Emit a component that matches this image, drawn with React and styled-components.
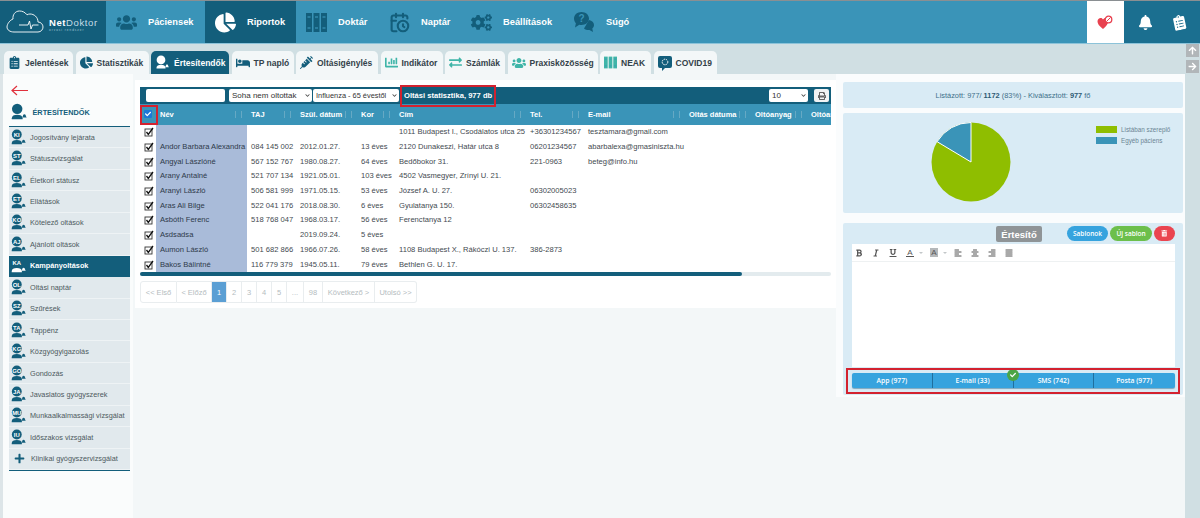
import React from 'react';
import styled, { createGlobalStyle } from 'styled-components';
import {
  FaUsers, FaChartPie, FaCogs, FaBell, FaBold, FaItalic, FaUnderline, FaAlignLeft, FaAlignCenter,
  FaAlignRight, FaAlignJustify, FaPrint, FaSyringe, FaBed, FaChartBar, FaTrashAlt, FaCheck, FaPlus,
  FaArrowUp, FaArrowRight, FaChevronDown, FaClipboardList, FaExchangeAlt,
} from 'react-icons/fa';
import { CalendarClock } from 'lucide-react';

const DARK = '#135e7b';
const BLUE = '#3a94b8';

const GlobalStyle = createGlobalStyle`
  html, body { margin: 0; padding: 0; background: #f3f7f8; }
  * { box-sizing: border-box; }
  body { font-family: "Liberation Sans", Arial, sans-serif; color: #444; }
`;

const Page = styled.div`
  width: 1200px;
  height: 518px;
  overflow: hidden;
  display: flex;
  flex-direction: column;
  border-top: 1px solid #8a8f92;
`;

const Header = styled.header`
  height: 43px;
  flex: none;
  display: flex;
  background: ${BLUE};
  border-bottom: 1px solid #8cc3d9;
`;

const Logo = styled.div`
  width: 106px;
  background: ${DARK};
  display: flex;
  align-items: center;
  padding-left: 6px;
  gap: 5px;
  color: #fff;
`;

const LogoName = styled.div`
  font-size: 9.5px;
  letter-spacing: 0.6px;
  line-height: 11px;
  padding-top: 5px;
  b { font-weight: 700; }
  span { font-weight: 400; color: #c6dde6; }
  small { display: block; font-size: 3px; line-height: 5px; letter-spacing: 1px; color: #a9cbd8; white-space: nowrap; }
`;

const NavItem = styled.div`
  display: flex;
  align-items: center;
  gap: 11px;
  width: ${(p) => p.$w}px;
  padding-left: 10px;
  font-size: 9.3px;
  font-weight: 700;
  color: #fff;
  background: ${(p) => (p.$active ? DARK : 'transparent')};
  svg { flex: none; color: ${(p) => (p.$active ? '#fff' : '#135e7b')}; }
`;

const HeaderRight = styled.div`
  margin-left: auto;
  display: flex;
`;

const HeartCell = styled.div`
  width: 37px;
  background: #fff;
  display: flex;
  align-items: center;
  justify-content: center;
`;

const DarkCells = styled.div`
  width: 76px;
  background: #1b6f90;
  color: #fff;
  display: flex;
  align-items: center;
  justify-content: space-around;
  padding: 0 4px;
`;

const TabBar = styled.nav`
  height: 30px;
  flex: none;
  background: #d0dfe3;
  display: flex;
  align-items: flex-end;
  padding-left: 4px;
  gap: 2.5px;
`;

const Tab = styled.div`
  width: ${(p) => p.$w}px;
  height: 23px;
  display: flex;
  align-items: center;
  gap: 4px;
  padding-left: 4px;
  border-radius: 5px 5px 0 0;
  font-size: 8.5px;
  font-weight: 700;
  white-space: nowrap;
  background: ${(p) => (p.$active ? DARK : '#f3f7f8')};
  color: ${(p) => (p.$active ? '#fff' : '#33424a')};
  svg { flex: none; color: ${(p) => (p.$active ? '#fff' : p.$tint || DARK)}; }
`;

const ScrollButtons = styled.div`
  margin-left: auto;
  align-self: flex-start;
  display: flex;
  flex-direction: column;
  gap: 3px;
  margin-right: 1px;
`;

const ScrollButton = styled.div`
  width: 13px;
  height: 13px;
  background: #b1b6b9;
  color: #fff;
  font-size: 9px;
  display: flex;
  align-items: center;
  justify-content: center;
`;

const Body = styled.div`
  flex: 1;
  display: flex;
  min-height: 0;
  border-left: 3px solid #dde5e8;
  border-right: 15px solid #d0dfe3;
`;

const Sidebar = styled.aside`
  width: 130px;
  flex: none;
  padding: 8px 3px 0 5.5px;
  background: #fafcfc;
`;

const BackArrow = styled.div`
  height: 16px;
  padding-left: 2px;
  color: #e0313d;
`;

const SideTitle = styled.div`
  height: 29px;
  display: flex;
  align-items: center;
  gap: 5px;
  padding-left: 1px;
  font-size: 7.3px;
  font-weight: 700;
  color: ${DARK};
  border-bottom: 1px solid ${DARK};
`;

const SideList = styled.div`
  border-bottom: 1px solid ${DARK};
`;

const SideItem = styled.div`
  height: 21.44px;
  display: flex;
  align-items: center;
  gap: 3.5px;
  padding-left: 1px;
  font-size: 7.3px;
  white-space: nowrap;
  font-weight: ${(p) => (p.$active ? 700 : 400)};
  background: ${(p) => (p.$active ? DARK : '#e1e9ed')};
  color: ${(p) => (p.$active ? '#fff' : '#4d5a60')};
  border-bottom: 1px solid ${(p) => (p.$active ? DARK : '#eef3f5')};
`;

const Main = styled.main`
  width: 701px;
  height: 228px;
  flex: none;
  margin: 6px 0 0 2px;
  padding: 7px 5px 0;
  background: #fff;
`;

const Toolbar = styled.div`
  width: 691px;
  height: 17px;
  background: ${DARK};
  display: flex;
  align-items: center;
  padding-left: 6px;
`;

const SearchBox = styled.div`
  width: 79px;
  height: 13px;
  background: #fff;
  border-radius: 2px;
  margin-right: 4px;
`;

const Select = styled.div`
  width: ${(p) => p.$w}px;
  height: 13px;
  background: #fff;
  border-radius: 2px;
  margin-right: 1px;
  padding: 0 2px 0 3px;
  display: flex;
  align-items: center;
  justify-content: space-between;
  font-size: ${(p) => p.$fs || 8}px;
  color: #333;
  white-space: nowrap;
  svg { flex: none; font-size: 5px; color: #444; }
`;

const Highlight = styled.div`
  width: 96px;
  height: 22px;
  flex: none;
  display: flex;
  align-items: center;
  padding-left: 2px;
  font-size: 7.6px;
  font-weight: 700;
  color: #fff;
  white-space: nowrap;
  border: 2px solid #d3222f;
`;

const ToolbarRight = styled.div`
  margin-left: auto;
  display: flex;
  align-items: center;
  gap: 5px;
  padding-right: 2px;
`;

const PrintButton = styled.div`
  width: 15px;
  height: 13px;
  background: #f1f3f4;
  border-radius: 2px;
  color: #666;
  font-size: 8px;
  display: flex;
  align-items: center;
  justify-content: center;
`;

const TableClip = styled.div`
  width: 691px;
  height: 168px;
  overflow: hidden;
`;

const Table = styled.table`
  width: 760px;
  table-layout: fixed;
  border-collapse: collapse;
  font-size: 7.6px;
  color: #3f4a50;
`;

const HeadRow = styled.tr`
  height: 21px;
  background: ${BLUE};
  color: #fff;
`;

const HeadCell = styled.th`
  position: relative;
  width: ${(p) => p.$w}px;
  text-align: left;
  font-weight: 700;
  font-size: 7.5px;
  padding: 0 0 0 4px;
  white-space: nowrap;
  overflow: hidden;
  &::after {
    content: '';
    position: absolute;
    right: 5px;
    top: 7px;
    width: 5px;
    height: 7px;
    border-left: 1.5px solid #66a9c4;
    border-right: 1.5px solid #66a9c4;
  }
`;

const CheckHead = styled.th`
  width: 16px;
  padding: 0;
  position: relative;
`;

const HeadCheck = styled.span`
  position: absolute;
  left: 4px;
  top: 6px;
  width: 8px;
  height: 8px;
  background: #1a78d8;
  border-radius: 1px;
  color: #fff;
  font-size: 6px;
  display: flex;
  align-items: center;
  justify-content: center;
`;

const HeadOutline = styled.span`
  position: absolute;
  left: 0;
  top: 1px;
  width: 18px;
  height: 20px;
  border: 2px solid #d3222f;
  z-index: 1;
`;

const Row = styled.tr`
  height: 14.7px;
`;

const Cell = styled.td`
  padding: 0 0 0 4px;
  white-space: nowrap;
  overflow: hidden;
  line-height: 8px;
`;

const NameCell = styled(Cell)`
  background: #a9bbd9;
  color: #2e3a4a;
`;

const CheckCell = styled.td`
  padding: 0 0 0 4px;
  line-height: 0;
`;

const ScrollTrack = styled.div`
  width: 691px;
  height: 4px;
  background: #e3ebee;
  border-radius: 2px;
`;

const ScrollThumb = styled.div`
  width: 602px;
  height: 4px;
  background: ${DARK};
  border-radius: 2px;
`;

const Pager = styled.div`
  display: flex;
  margin-top: 5px;
  height: 22px;
`;

const PageButton = styled.div`
  width: ${(p) => p.$w}px;
  display: flex;
  align-items: center;
  justify-content: center;
  font-size: 7.5px;
  white-space: nowrap;
  border: 1px solid #e9edef;
  border-left-width: 0;
  background: ${(p) => (p.$active ? '#5b9fd4' : '#fff')};
  color: ${(p) => (p.$active ? '#fff' : '#b5bcc0')};
  &:first-child { border-left-width: 1px; border-radius: 3px 0 0 3px; }
  &:last-child { border-radius: 0 3px 3px 0; }
`;

const RightColumn = styled.section`
  width: 349px;
  flex: none;
  padding: 8px 2px 0 7px;
  display: flex;
  flex-direction: column;
  background: #fafcfd;
  height: 323px;
`;

const StatCard = styled.div`
  height: 26px;
  flex: none;
  background: #d9ebf5;
  border-radius: 2px;
  display: flex;
  align-items: center;
  justify-content: center;
  font-size: 7.4px;
  color: #40708a;
  white-space: pre;
  b { color: #2d5a73; }
`;

const ChartCard = styled.div`
  height: 100px;
  flex: none;
  margin-top: 5px;
  background: #d9ebf5;
  border-radius: 2px;
  display: flex;
  padding: 9px 0 0 88px;
`;

const Legend = styled.div`
  margin: 4px 0 0 85px;
  display: flex;
  flex-direction: column;
  gap: 4px;
`;

const LegendItem = styled.div`
  height: 7px;
  display: flex;
  align-items: center;
  gap: 4px;
  font-size: 6.3px;
  color: #6b8594;
  white-space: nowrap;
  i { width: 21px; height: 7px; background: ${(p) => p.$color}; }
`;

const NotifyCard = styled.div`
  height: 172px;
  flex: none;
  margin-top: 10px;
  padding: 3px 8px 0 9px;
  background: #d9ebf5;
  border-radius: 2px;
  position: relative;
`;

const NotifyHead = styled.div`
  height: 18px;
  display: flex;
  align-items: flex-start;
`;

const NotifyTitle = styled.div`
  width: 46px;
  height: 16px;
  margin-left: 144px;
  background: #8f9497;
  border-radius: 2px;
  color: #fff;
  font-size: 9.5px;
  font-weight: 700;
  display: flex;
  align-items: center;
  justify-content: center;
`;

const Pill = styled.div`
  width: ${(p) => p.$w}px;
  height: 15px;
  margin-left: ${(p) => p.$ml || 2}px;
  border-radius: 8px;
  background: ${(p) => p.$bg};
  color: #fff;
  font-family: "Open Sans", sans-serif;
  font-size: 6.5px;
  font-weight: 600;
  display: flex;
  align-items: center;
  justify-content: center;
`;

const Editor = styled.div`
  height: 123px;
  background: #fff;
`;

const EditorTools = styled.div`
  height: 18px;
  padding-left: 3px;
  display: flex;
  align-items: center;
  gap: 9px;
  color: #555;
  font-size: 8px;
  border-bottom: 1px solid #eef1f2;
`;

const ToolLetter = styled.span`
  display: flex;
  align-items: center;
  justify-content: center;
  width: 8px;
  height: 9px;
  font-size: 8px;
  background: ${(p) => (p.$box ? '#b5b8ba' : 'transparent')};
  border-bottom: ${(p) => (p.$box ? 0 : 1)}px solid #555;
  margin-right: -4px;
`;

const Caret = styled.span`
  width: 0;
  height: 0;
  margin-right: -2px;
  border-left: 2px solid transparent;
  border-right: 2px solid transparent;
  border-top: 2px solid #c3c7c9;
`;

const ChannelOutline = styled.div`
  position: absolute;
  left: 3px;
  right: 3px;
  top: 145px;
  height: 26px;
  border: 2px solid #d3222f;
`;

const ChannelRow = styled.div`
  margin-top: 6px;
  height: 15px;
  display: grid;
  grid-template-columns: repeat(4, 1fr);
  background: #36a3de;
  border-radius: 2px;
  position: relative;
  box-shadow: 0 1px 1px #7da7bd;
`;

const Channel = styled.div`
  display: flex;
  align-items: center;
  justify-content: center;
  font-family: "Open Sans", sans-serif;
  font-size: 6.8px;
  color: #fff;
  font-weight: 600;
  border-right: 1px solid ${(p) => (p.$last ? 'transparent' : '#1f6f9e')};
`;

const GreenBadge = styled.span`
  position: absolute;
  left: 155px;
  top: -4px;
  width: 12px;
  height: 12px;
  border-radius: 50%;
  background: #4ba546;
  color: #fff;
  font-size: 6px;
  display: flex;
  align-items: center;
  justify-content: center;
`;

// person silhouette with a small bell, head carries the short code
const PersonIcon = ({ code, light, size = 17 }) => {
  const c = light ? '#fff' : '#135e7b';
  return (
    <svg width={size} height={size} viewBox="0 0 20 20" style={{ flex: 'none' }}>
      {(!light || !code) && <circle cx="8" cy="6.500" r="5.800" fill={c} />}
      <path d="M2 17c0-2.800 2.500-4 6-4s6 1.200 6 4v1H2z" fill={c} />
      <path d="M16 12.500c1.100 0 1.600.9 1.600 2l.9 1.700h-5l.9-1.700c0-1.100.5-2 1.600-2z" fill={c} />
      <text x="8" y="9" textAnchor="middle" fontSize="7" fontWeight="700" fill="#fff" fontFamily="Liberation Sans">{code}</text>
    </svg>
  );
};

const CheckMark = () => (
  <svg width="10" height="10" viewBox="0 0 10 10">
    <rect x="1" y="2" width="7" height="7" fill="#fff" stroke="#333" strokeWidth="0.9" />
    <path d="M2.500 5l1.800 2.400L9 1" fill="none" stroke="#111" strokeWidth="1.300" />
  </svg>
);

const CloudLogo = () => (
  <svg width="38" height="24" viewBox="0 0 38 24" fill="none" stroke="#fff" strokeWidth="0.9">
    <path d="M8 22h24c3 0 5-2.500 5-5s-2-5-5-5c0-5-4-8-8-8-1 0-2 .2-3 .8C19 2 16 1 13.500 1 9 1 6.500 5 7 9c-3 1-6 5-6 8 0 3 3 5 7 5z" />
    <path d="M13 15h9l1.500-4 1.500 8 1.500-4h6" />
  </svg>
);

const BooksIcon = ({ size = 21, color = 'currentColor' }) => (
  <svg width={size} height={size} viewBox="0 0 21 21" fill={color}>
    <rect x="0" y="1" width="6" height="19" />
    <rect x="7.500" y="1" width="6" height="19" />
    <rect x="15" y="1" width="6" height="19" />
    <g fill="#3a94b8" opacity="0.6">
      <rect x="1.500" y="4" width="3" height="2" />
      <rect x="9" y="4" width="3" height="2" />
      <rect x="16.500" y="4" width="3" height="2" />
      <rect x="1.500" y="15" width="3" height="2" />
      <rect x="9" y="15" width="3" height="2" />
      <rect x="16.500" y="15" width="3" height="2" />
    </g>
  </svg>
);

const HelpIcon = () => (
  <svg width="22" height="22" viewBox="0 0 22 22">
    <path d="M16 9c3 .5 5 2.500 5 5 0 1.500-.7 2.700-1.700 3.500l.7 3.500-3.500-2c-2 .3-4-.3-5.500-1.500z" fill="#135e7b" />
    <path d="M8.500 1C12.600 1 16 3.800 16 7.500S12.600 14 8.500 14c-.8 0-1.500-.1-2.200-.3L2 16.500l.9-4.300C1.700 11 1 9.300 1 7.500 1 3.800 4.400 1 8.500 1z" fill="#135e7b" />
    <text x="8.500" y="11" textAnchor="middle" fontSize="10" fontWeight="700" fill="#3a94b8" fontFamily="Liberation Sans">?</text>
  </svg>
);

const HeartIcon = () => (
  <svg width="17" height="15" viewBox="0 0 17 15">
    <path d="M6 14C2 11 .5 8.500.5 6.500.5 4.500 2 3 3.700 3 4.800 3 5.600 3.600 6 4.500 6.600 3.600 7.400 3 8.500 3c1.500 0 2.800 1.300 2.800 3 0 2.500-2 5.500-5.300 8z" fill="#e8414f" />
    <circle cx="11.500" cy="4.500" r="3.300" fill="#fff" stroke="#e8414f" strokeWidth="1.300" />
    <path d="M9.500 6.500l4-4" stroke="#e8414f" strokeWidth="1" />
  </svg>
);

const CovidIcon = () => (
  <svg width="14" height="16" viewBox="0 0 14 16">
    <path d="M2 1h10a2 2 0 0 1 2 2v8a2 2 0 0 1-2 2H7l-3 3v-3H2a2 2 0 0 1-2-2V3a2 2 0 0 1 2-2z" fill="#135e7b" />
    <circle cx="7" cy="7" r="2.800" fill="none" stroke="#fff" strokeWidth="1" strokeDasharray="1.500 0.800" />
  </svg>
);

const PieChart = () => (
  <svg width="80" height="80" viewBox="0 0 80 80">
    <circle cx="40" cy="40" r="39.500" fill="#8fbe00" />
    <path d="M40 40V.5A39.500 39.500 0 0 0 6.100 19.700z" fill="#3a94b8" stroke="#fff" strokeWidth="1" />
  </svg>
);

const tabs = [
  { label: 'Jelentések', w: 69, icon: <FaClipboardList size={13} /> },
  { label: 'Statisztikák', w: 73, icon: <FaChartPie size={13} /> },
  { label: 'Értesítendők', w: 78, active: true, icon: <PersonIcon light code="" size={15} /> },
  { label: 'TP napló', w: 62, icon: <FaBed size={14} /> },
  { label: 'Oltásigénylés', w: 82, icon: <FaSyringe size={13} /> },
  { label: 'Indikátor', w: 62, tint: '#3fb5a8', icon: <FaChartBar size={13} /> },
  { label: 'Számlák', w: 60, tint: '#3fb5a8', icon: <FaExchangeAlt size={13} /> },
  { label: 'Praxisközösség', w: 90, tint: '#3fb5a8', icon: <FaUsers size={14} /> },
  { label: 'NEAK', w: 51, tint: '#3fb5a8', icon: <BooksIcon size={13} /> },
  { label: 'COVID19', w: 63, icon: <CovidIcon /> },
];

const sideItems = [
  ['KI', 'Jogosítvány lejárata'], ['ST', 'Státuszvizsgálat'], ['EL', 'Életkori státusz'],
  ['ET', 'Ellátások'], ['KO', 'Kötelező oltások'], ['AJ', 'Ajánlott oltások'],
  ['KA', 'Kampányoltások', true], ['OL', 'Oltási naptár'], ['SZ', 'Szűrések'], ['TA', 'Táppénz'],
  ['KG', 'Közgyógyigazolás'], ['GO', 'Gondozás'], ['JA', 'Javaslatos gyógyszerek'],
  ['MU', 'Munkaalkalmassági vizsgálat'], ['IU', 'Időszakos vizsgálat'],
];

const columns = [
  ['Név', 91], ['TAJ', 49], ['Szül. dátum', 61], ['Kor', 38], ['Cím', 131], ['Tel.', 58],
  ['E-mail', 101], ['Oltás dátuma', 66], ['Oltóanyag', 56], ['Oltóanyag', 93],
];

const rows = [
  ['', '', '', '', '1011 Budapest I., Csodálatos utca 25', '+36301234567', 'tesztamara@gmail.com'],
  ['Andor Barbara Alexandra', '084 145 002', '2012.01.27.', '13 éves', '2120 Dunakeszi, Határ utca 8', '06201234567', 'abarbalexa@gmasiniszta.hu'],
  ['Angyal Lászlóné', '567 152 767', '1980.08.27.', '64 éves', 'Bedőbokor 31.', '221-0963', 'beteg@info.hu'],
  ['Arany Antalné', '521 707 134', '1921.05.01.', '103 éves', '4502 Vasmegyer, Zrínyi U. 21.', '', ''],
  ['Aranyi László', '506 581 999', '1971.05.15.', '53 éves', 'József A. U. 27.', '06302005023', ''],
  ['Aras Ali Bilge', '522 041 176', '2018.08.30.', '6 éves', 'Gyulatanya 150.', '06302458635', ''],
  ['Asbóth Ferenc', '518 768 047', '1968.03.17.', '56 éves', 'Ferenctanya 12', '', ''],
  ['Asdsadsa', '', '2019.09.24.', '5 éves', '', '', ''],
  ['Aumon László', '501 682 866', '1966.07.26.', '58 éves', '1108 Budapest X., Rákóczi U. 137.', '386-2873', ''],
  ['Bakos Bálintné', '116 779 379', '1945.05.11.', '79 éves', 'Bethlen G. U. 17.', '', ''],
];

const pages = [
  ['<< Első', 37], ['< Előző', 35], ['1', 15, true], ['2', 15], ['3', 15], ['4', 15], ['5', 15],
  ['...', 17], ['98', 19], ['Következő >', 52], ['Utolsó >>', 42],
];

export default function App() {
  return (
    <Page>
      <GlobalStyle />
      <Header>
        <Logo>
          <CloudLogo />
          <LogoName>
            <b>Net</b><span>Doktor</span>
            <small>orvosi rendszer</small>
          </LogoName>
        </Logo>
        <NavItem $w={99}><FaUsers size={21} />Páciensek</NavItem>
        <NavItem $w={91} $active><FaChartPie size={21} />Riportok</NavItem>
        <NavItem $w={83}><BooksIcon />Doktár</NavItem>
        <NavItem $w={82}><CalendarClock size={21} strokeWidth={2.4} />Naptár</NavItem>
        <NavItem $w={102}><FaCogs size={21} />Beállítások</NavItem>
        <NavItem $w={70}><HelpIcon />Súgó</NavItem>
        <HeaderRight>
          <HeartCell><HeartIcon /></HeartCell>
          <DarkCells>
            <FaBell size={15} />
            <FaClipboardList size={15} style={{ transform: 'rotate(-12deg)' }} />
          </DarkCells>
        </HeaderRight>
      </Header>

      <TabBar>
        {tabs.map((t) => (
          <Tab key={t.label} $w={t.w} $active={t.active} $tint={t.tint}>{t.icon}{t.label}</Tab>
        ))}
        <ScrollButtons>
          <ScrollButton><FaArrowUp /></ScrollButton>
          <ScrollButton><FaArrowRight /></ScrollButton>
        </ScrollButtons>
      </TabBar>

      <Body>
        <Sidebar>
          <BackArrow>
            <svg width="17" height="11" viewBox="0 0 17 11" fill="none" stroke="currentColor" strokeWidth="1.2">
              <path d="M17 5.500H1M6 1L1 5.500 6 10" />
            </svg>
          </BackArrow>
          <SideTitle><PersonIcon code="" size={18} />ÉRTESÍTENDŐK</SideTitle>
          <SideList>
            {sideItems.map(([code, label, active]) => (
              <SideItem key={label} $active={active}>
                <PersonIcon code={code} light={active} />
                {label}
              </SideItem>
            ))}
            <SideItem>
              <FaPlus size={11} color={DARK} style={{ margin: '0 3px 0 4px' }} />
              Klinikai gyógyszervizsgálat
            </SideItem>
          </SideList>
        </Sidebar>

        <Main>
          <Toolbar>
            <SearchBox />
            <Select $w={83}>Soha nem oltottak<FaChevronDown /></Select>
            <Select $w={86} $fs={7.4}>Influenza - 65 évestől<FaChevronDown /></Select>
            <Highlight>Oltási statisztika, 977 db</Highlight>
            <ToolbarRight>
              <Select $w={39}>10<FaChevronDown /></Select>
              <PrintButton><FaPrint /></PrintButton>
            </ToolbarRight>
          </Toolbar>
          <TableClip>
            <Table>
              <thead>
                <HeadRow>
                  <CheckHead>
                    <HeadCheck><FaCheck /></HeadCheck>
                    <HeadOutline />
                  </CheckHead>
                  {columns.map(([label, w], i) => (
                    <HeadCell key={i} $w={w}>{label}</HeadCell>
                  ))}
                </HeadRow>
              </thead>
              <tbody>
                {rows.map((r, i) => (
                  <Row key={i}>
                    <CheckCell><CheckMark /></CheckCell>
                    <NameCell>{r[0]}</NameCell>
                    {r.slice(1).map((v, j) => <Cell key={j}>{v}</Cell>)}
                    <Cell /><Cell /><Cell />
                  </Row>
                ))}
              </tbody>
            </Table>
          </TableClip>
          <ScrollTrack><ScrollThumb /></ScrollTrack>
          <Pager>
            {pages.map(([label, w, active]) => (
              <PageButton key={label} $w={w} $active={active}>{label}</PageButton>
            ))}
          </Pager>
        </Main>

        <RightColumn>
          <StatCard>
            <span>Listázott: 977/ <b>1172</b> (83%) - Kiválasztott: <b>977</b> fő</span>
          </StatCard>
          <ChartCard>
            <PieChart />
            <Legend>
              <LegendItem $color="#8fbe00"><i />Listában szereplő</LegendItem>
              <LegendItem $color="#3a94b8"><i />Egyéb páciens</LegendItem>
            </Legend>
          </ChartCard>
          <NotifyCard>
            <NotifyHead>
              <NotifyTitle>Értesítő</NotifyTitle>
              <Pill $w={41} $bg="#36a3de" $ml={25}>Sablonok</Pill>
              <Pill $w={42} $bg="#6cbf4b">Új sablon</Pill>
              <Pill $w={21} $bg="#ea4550"><FaTrashAlt /></Pill>
            </NotifyHead>
            <Editor>
              <EditorTools>
                <FaBold /><FaItalic /><FaUnderline />
                <ToolLetter>A</ToolLetter><Caret />
                <ToolLetter $box>A</ToolLetter><Caret />
                <FaAlignLeft /><FaAlignCenter /><FaAlignRight /><FaAlignJustify />
              </EditorTools>
            </Editor>
            <ChannelRow>
              <Channel>App (977)</Channel>
              <Channel>E-mail (33)</Channel>
              <Channel>SMS (742)</Channel>
              <Channel $last>Posta (977)</Channel>
              <GreenBadge><FaCheck /></GreenBadge>
            </ChannelRow>
            <ChannelOutline />
          </NotifyCard>
        </RightColumn>
      </Body>
    </Page>
  );
}
